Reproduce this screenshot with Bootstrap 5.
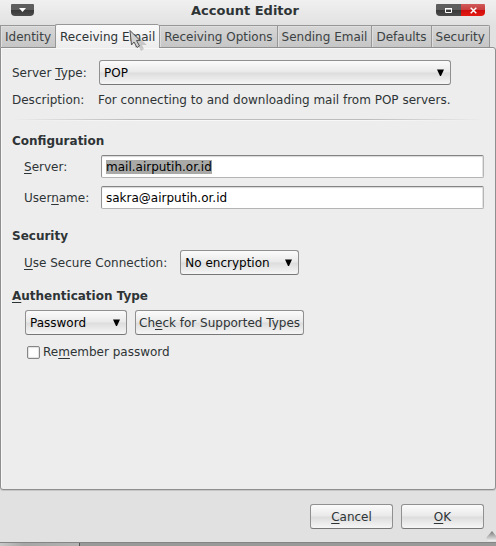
<!DOCTYPE html>
<html lang="en">
<head>
<meta charset="utf-8">
<meta name="viewport" content="width=device-width, initial-scale=1">
<title>Account Editor</title>
<link href="https://cdn.jsdelivr.net/npm/bootstrap@5.3.0/dist/css/bootstrap.min.css" rel="stylesheet">
<style>
  body { font: 12px/16px "DejaVu Sans", Verdana, sans-serif; color: #2e3436; background: #e1e1e1; }
  u { text-decoration-skip-ink: none; text-underline-offset: 2px; text-decoration-thickness: 1px; }

  .titlebar { height: 24px; background: linear-gradient(#f0f0f0, #e2e2e2); padding: 0 11px; }
  .titlebar h1 { font-size: 13px; line-height: 22px; font-weight: 700; padding-left: 20px; }
  .win-btn { border: 0; padding: 0; height: 12px; width: 23px; margin-top: 4px; display: flex; align-items: center; justify-content: center; background: linear-gradient(#5d5d5d 50%, #393939 50%, #4c4c4c); }
  .win-menu { border-radius: 1px 1px 4px 4px; }
  .win-max { width: 25px; border-radius: 1px 0 0 4px; }
  .win-close { width: 24px; border-radius: 0 1px 4px 0; background: linear-gradient(#cf5a5a, #c93c3c 50%, #cf0d0d 50%, #e31a10); }

  .editor-tabs { border: 0; height: 23px; align-items: flex-end; flex-wrap: nowrap; --bs-nav-tabs-border-width: 0; }
  .editor-tabs .nav-link { height: 22px; padding: 1px 4px 0; margin: 0; color: #3c4244; font-size: 12px; line-height: 17px; white-space: nowrap; border: 1px solid #979797; border-right-width: 0; border-bottom-width: 0; border-radius: 0; background: linear-gradient(#d6d6d6, #c6c6c6); box-shadow: inset 1px 1px #dedede; }
  .editor-tabs .nav-item:last-child .nav-link { border-right-width: 1px; border-radius: 0 2px 0 0; }
  .editor-tabs .nav-link.active { height: 24px; margin-bottom: -1px; position: relative; z-index: 1; color: #2e3436; border-color: #979797; border-radius: 2px 2px 0 0; background: linear-gradient(#fafafa, #ededed); box-shadow: none; }

  .panel { border: 1px solid #8f8f8f; border-radius: 0 3px 3px 3px; background: #ededed; padding: 12px 11px; box-shadow: inset 1px 1px #f7f7f7, 0 1px #c6c6c6; }
  .pair { display: grid; grid-template-columns: 86px max-content; row-gap: 7px; align-items: center; }
  .rule { height: 2px; margin-top: 11px; background: linear-gradient(90deg, #ededed, #bcbcbc 25%, #bcbcbc 75%, #ededed) top/100% 1px no-repeat, linear-gradient(90deg, #ededed, #f8f8f8 25%, #f8f8f8 75%, #ededed) bottom/100% 1px no-repeat; }
  .group { margin-top: 12px; }
  .group + .group { margin-top: 19px; }
  .group + .group + .group { margin-top: 13px; }
  .section-title { font-size: 12px; line-height: 16px; font-weight: 700; margin: 0 0 6px; }
  .indent { padding-left: 12px; }
  .fields { display: grid; grid-template-columns: 77px 1fr; row-gap: 8px; align-items: center; }

  .entry { height: 23px; min-height: 0; padding: 0 4px; font-size: 12px; line-height: 16px; color: #000; background: #fff; border: 1px solid #b4b4b4; border-top-color: #848484; border-left-color: #949494; border-radius: 2px; box-shadow: inset 0 1px 1px #d8d8d8, inset -1px 0 #e4e4e4; }
  .entry:focus { background: #fff; color: #000; border-color: #848484 #b4b4b4 #b4b4b4 #949494; box-shadow: inset 0 1px 1px #d8d8d8, inset -1px 0 #e4e4e4; }
  .entry::selection { background: #a9aaa8; color: #000; }

  .chooser, .push { height: 25px; font-size: 12px; line-height: 16px; border: 1px solid #909090; border-bottom-color: #777; border-radius: 3px; --face: linear-gradient(#fbfbfb, #e9e9e9 49%, #dcdcdc 51%, #f6f6f6); background: var(--face); }
  .chooser { margin-left: 1px; padding: 0 24px 0 4px; color: #000; background: url("data:image/svg+xml,%3Csvg xmlns='http://www.w3.org/2000/svg' width='7' height='7'%3E%3Cpath d='M0 .5h7L4 7H3z'/%3E%3C/svg%3E") right 6px center/7px 7px no-repeat, var(--face); }
  .push { padding: 0 3px; color: #2e3436; }
  .push:hover { color: #2e3436; background: var(--face); border-color: #909090; }
  .secure { width: 119px; }
  .method { width: 102px; }
  .dialog-btn { width: 83px; }
  .tick-row { margin-top: 9px; gap: 3px; }
  .tick { appearance: none; width: 13px; height: 13px; margin: 0 0 0 3px; border: 1px solid #868686; border-radius: 2px; background: #fff; box-shadow: inset 0 0 1px 1px #e2e2e2; }

  .actions { padding: 14px 12px 13px; }
  .grip { right: 0; bottom: 1px; }
  .pointer { left: 128px; top: 28px; z-index: 3; pointer-events: none; }
  .behind { height: 4px; border-top: 1px solid #858585; background: linear-gradient(90deg, #c9c9c9, #a6a6a6 24px, #b2b2b2 79px, #555 79px, #555 80px, #999 80px); }
</style>
</head>
<body class="position-relative d-flex flex-column min-vh-100 m-0">
  <header class="titlebar d-flex justify-content-between">
    <button class="win-btn win-menu" type="button" aria-label="Window menu">
      <svg width="7" height="4"><path d="M0 0h7L3.5 4z" fill="#fff"/></svg>
    </button>
    <h1 class="m-0 flex-grow-1 text-center">Account Editor</h1>
    <div class="d-flex">
      <button class="win-btn win-max" type="button" aria-label="Maximize">
        <svg width="7" height="5"><path d="M.5 1h6v3.500h-6zM0 .5h7" fill="none" stroke="#fff"/></svg>
      </button>
      <button class="win-btn win-close" type="button" aria-label="Close">
        <svg width="7" height="7"><path d="M.7.7l5.600 5.600M6.300.7L.7 6.300" stroke="#fff" stroke-width="1.500"/></svg>
      </button>
    </div>
  </header>

  <ul class="nav nav-tabs editor-tabs" role="tablist">
    <li class="nav-item" role="presentation"><button class="nav-link" type="button" role="tab">Identity</button></li>
    <li class="nav-item" role="presentation"><button class="nav-link active" type="button" role="tab" aria-selected="true">Receiving Email</button></li>
    <li class="nav-item" role="presentation"><button class="nav-link" type="button" role="tab">Receiving Options</button></li>
    <li class="nav-item" role="presentation"><button class="nav-link" type="button" role="tab">Sending Email</button></li>
    <li class="nav-item" role="presentation"><button class="nav-link" type="button" role="tab">Defaults</button></li>
    <li class="nav-item" role="presentation"><button class="nav-link" type="button" role="tab">Security</button></li>
  </ul>

  <main class="panel flex-grow-1">
    <div class="pair">
      <label for="type">Server <u>T</u>ype:</label>
      <select class="form-select chooser" id="type"><option>POP</option></select>
      <span>Description:</span>
      <span>For connecting to and downloading mail from POP servers.</span>
    </div>
    <div class="rule"></div>

    <section class="group">
      <h2 class="section-title">Configuration</h2>
      <div class="indent fields">
        <label for="server"><u>S</u>erver:</label>
        <input class="form-control entry" id="server" type="text" value="mail.airputih.or.id" autofocus>
        <label for="user">User<u>n</u>ame:</label>
        <input class="form-control entry" id="user" type="text" value="sakra@airputih.or.id">
      </div>
    </section>

    <section class="group">
      <h2 class="section-title">Security</h2>
      <div class="indent d-flex align-items-center gap-2">
        <label class="me-1" for="secure"><u>U</u>se Secure Connection:</label>
        <select class="form-select chooser secure" id="secure"><option>No encryption</option></select>
      </div>
    </section>

    <section class="group">
      <h2 class="section-title"><label for="method"><u>A</u>uthentication Type</label></h2>
      <div class="indent d-flex gap-2">
        <select class="form-select chooser method" id="method"><option>Password</option></select>
        <button class="btn push" type="button">Ch<u>e</u>ck for Supported Types</button>
      </div>
      <div class="indent tick-row d-flex align-items-center">
        <input class="tick" id="remember" type="checkbox">
        <label for="remember">Re<u>m</u>ember password</label>
      </div>
    </section>
  </main>

  <footer class="actions position-relative d-flex justify-content-end gap-2">
    <button class="btn push dialog-btn" type="button"><u>C</u>ancel</button>
    <button class="btn push dialog-btn" type="button"><u>O</u>K</button>
    <svg class="grip position-absolute" width="10" height="10"><defs><linearGradient id="g" x2="0" y2="1"><stop stop-color="#777"/><stop offset="1" stop-color="#f0f0f0"/></linearGradient></defs><path d="M0 7L6 0l4 5v5H2z" fill="url(#g)"/></svg>
  </footer>
  <div class="behind"></div>

  <svg class="pointer position-absolute" width="20" height="24" aria-hidden="true">
    <path d="M7 6v14l3-3 3 6 3-2-2-4h5z" fill="#000" opacity=".16"/>
    <path d="M2 2.500l10 10H8.500l3 5.500-2.500 1.500-3-5.500L3.500 17z" fill="#d0d0d0" stroke="#555"/>
  </svg>

<script src="https://cdn.jsdelivr.net/npm/bootstrap@5.3.0/dist/js/bootstrap.bundle.min.js"></script>
<script>
  const server = document.getElementById('server');
  server.focus();
  server.select();
</script>
</body>
</html>
